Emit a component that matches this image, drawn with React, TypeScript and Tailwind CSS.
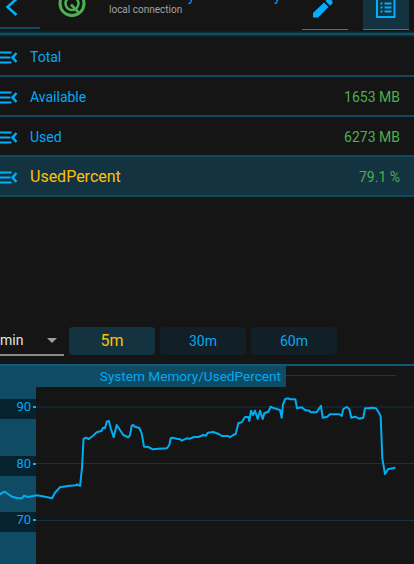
const pts = "0,494.7 1.7,493 5,491.7 8,494 12,496.7 17,498 22,498.3 24,495.7 28,497 37,495.3 45,496.7 52,498.3 55,492.7 60,487.3 68,486 76,485.3 77,484.3 80,486 82,468 83.5,439 86,437.7 88.7,439 93,435.7 96.7,432.3 101.7,430.7 103,427.7 105,428.3 106.7,421.7 109,421 110.7,428.3 113.7,437.3 116.7,425 120,430 123.3,435 128.3,437.3 130,435 131.7,425.7 133.3,425 135,426.7 139.3,428 141.7,433.3 144,446.7 148.3,447 152.7,449.3 158.3,448.7 166.7,448.3 169.3,445 170.7,438.3 172.7,437.7 176.7,438.7 180,439.3 181.7,440.7 186.7,438.3 190,438.7 194,437 198.3,437 203.3,435 206,435.7 207.7,432.7 213.3,432 219.3,434.3 221.7,436 228.3,436 230,437.3 233.3,435 235.7,434 238.3,423.3 241.7,422.3 245,417 248.3,417 249.3,421 251,410.7 253,415 255,410.7 257.7,419 260,410.7 262.7,419 264.3,413.3 268.3,411.7 270.7,406.7 272.7,407.7 280,410 281.7,417.7 283,404.3 285.3,399 288.3,398.3 290,399.3 295.3,399.3 297,408.3 301.7,407.3 305,410 309.3,410.7 310.7,412.3 316.7,412.3 321,405.7 322.7,417.7 327.3,416.7 330,414.3 339.3,414.3 341.7,416 343.3,409 346.7,407 349.3,409 351.3,417.7 355,416.7 359.3,418.7 363.3,417.7 365,408.3 368.3,408.3 371.7,407.7 376,408.3 379.3,413.3 380.7,416.7 382.3,458.3 385,474 388.3,469 393.3,468.3 395.3,467.3";

function RowIcon() {
  return (
    <svg width="18" height="13" viewBox="0 0 18 13" className="mt-[1px] shrink-0" fill="none" stroke="#00b0ff" strokeWidth="2">
      <path d="M0 1.5H11.5M0 6.5H10.5M0 11.5H11.5" />
      <path d="M16.5 2L12.5 6.5L16.5 11" strokeWidth="2.4" />
    </svg>
  );
}

function Row({ label, value, active }: { label: string; value?: string; active?: boolean }) {
  return (
    <div className={`flex h-[40px] items-center border-b-2 border-[#0f4a5f] pt-[2px] pr-[14px] ${active ? "bg-[#12333f]" : ""}`}>
      <RowIcon />
      <span className={`ml-[12px] flex-1 ${active ? "text-[16px] text-[#ffc107]" : "text-[14px] text-[#03a9f4]"}`}>{label}</span>
      {value && <span className="text-[14px] text-[#4caf50]">{value}</span>}
    </div>
  );
}

function Range({ label, active }: { label: string; active?: boolean }) {
  return (
    <div className={`flex h-[28px] w-[86px] items-center justify-center rounded-[4px] ${active ? "bg-[#12333f] text-[16px] text-[#ffc107]" : "bg-[#111f26] text-[14px] text-[#03a9f4]"}`}>
      {label}
    </div>
  );
}

function Tick({ label, mt }: { label: string; mt: string }) {
  return (
    <div className={`flex h-[20px] items-center justify-end bg-[#06222e] pb-[4px] text-[13px] text-[#03a9f4] ${mt}`}>
      <span>{label}</span>
      <span className="ml-[2px] h-[2px] w-[3px] bg-[#00b0ff]" />
    </div>
  );
}

export default function App() {
  return (
    <div className="relative h-[564px] w-[414px] overflow-hidden bg-[#151515] font-['Roboto',sans-serif]">
      {/* header */}
      <div className="flex h-[33px] items-start">
        <div className="h-[29px] w-[40px] border-b-2 border-[#0f4a5f] pl-[5px]">
          <svg width="13" height="16" viewBox="0 0 13 16" fill="none" stroke="#00b0ff" strokeWidth="2.6">
            <path d="M11.5 -1L2.5 7L11.5 15" />
          </svg>
        </div>
        <svg width="28" height="18" viewBox="0 10 28 18" className="ml-[18px]" fill="none" stroke="#4caf50">
          <circle cx="14" cy="13.5" r="12" strokeWidth="3" />
          <circle cx="14" cy="13.5" r="6.5" strokeWidth="2.6" />
          <path d="M13 14.5L21 23" strokeWidth="2.6" />
        </svg>
        <div className="relative ml-[23px] w-[193px]">
          <div className="mt-[4px] text-[10px] leading-[12px] text-[#a3a3a3]">local connection</div>
          <span className="absolute top-[-12px] left-[79px] text-[14px] leading-[16px] text-[#03a9f4]">y</span>
          <span className="absolute top-[-12px] left-[165px] text-[14px] leading-[16px] text-[#03a9f4]">y</span>
        </div>
        <div className="flex h-[30px] w-[46px] justify-center border-b border-[#1088b0]">
          <svg width="20" height="18" viewBox="0 0 20 18" fill="#00b0ff" className="ml-[-4px]">
            <path d="M0 17.5V13L11 2.5L15.5 7L5 17.5Z" />
            <path d="M12.5 1L14 -0.5H18L19.5 1.5V3.5L17 5.8Z" />
          </svg>
        </div>
        <div className="ml-[15px] flex h-[30px] w-[46px] justify-center border-b border-[#1088b0] bg-[#12333f]">
          <svg width="20" height="18" viewBox="0 0 20 18" fill="none" stroke="#00b0ff">
            <rect x="1" y="-4" width="17.5" height="21" strokeWidth="2" />
            <path d="M4.5 3.5H6.5M8.5 3.5H15.5M4.5 7.5H6.5M8.5 7.5H15.5M4.5 11.5H6.5M8.5 11.5H15.5" strokeWidth="2" />
          </svg>
        </div>
      </div>
      <div className="h-[2px] bg-[#0f4f68] shadow-[0_0_2px_1px_#0d3c4e]" />
      {/* rows */}
      <div className="mt-[2px]">
        <Row label="Total" />
        <Row label="Available" value="1653 MB" />
        <Row label="Used" value="6273 MB" />
        <Row label="UsedPercent" value="79.1 %" active />
      </div>
      {/* controls */}
      <div className="mt-[130px] flex h-[29px] items-start">
        <div className="flex h-[29px] w-[64px] items-center justify-between border-b-2 border-[#8a8a8a] pr-[7px] text-[14px] text-[#e6e6e6]">
          <span>min</span>
          <span className="h-0 w-0 border-x-[5px] border-t-[5px] border-x-transparent border-t-[#a0a0a0]" />
        </div>
        <div className="ml-[5px] flex gap-[5px]">
          <Range label="5m" active />
          <Range label="30m" />
          <Range label="60m" />
        </div>
      </div>
      {/* chart */}
      <div className="relative mt-[8px] h-[200px] border-t-2 border-[#0f5a78]">
        <div className="relative flex h-[21px] w-[286px] justify-end bg-[#0f4c63] pr-[5px] text-[13.6px] leading-[20px] text-[#03a9f4]">
          System Memory/UsedPercent
        </div>
        <div className="h-[177px] w-[36px] overflow-hidden bg-[#0f4c63]">
          <Tick label="90" mt="mt-[12px]" />
          <Tick label="80" mt="mt-[37px]" />
          <Tick label="70" mt="mt-[36px]" />
        </div>
        <svg width="414" height="200" viewBox="0 366 414 200" className="absolute top-0 left-0" fill="none">
          <path d="M286 375.5H396" stroke="#1b3a33" strokeWidth="1" />
          <path d="M36 407H414M36 463.5H414M36 520.5H414" stroke="#12333f" strokeWidth="1" />
          <polyline points={pts} stroke="#00adf2" strokeWidth="2" strokeLinejoin="round" />
        </svg>
      </div>
    </div>
  );
}
